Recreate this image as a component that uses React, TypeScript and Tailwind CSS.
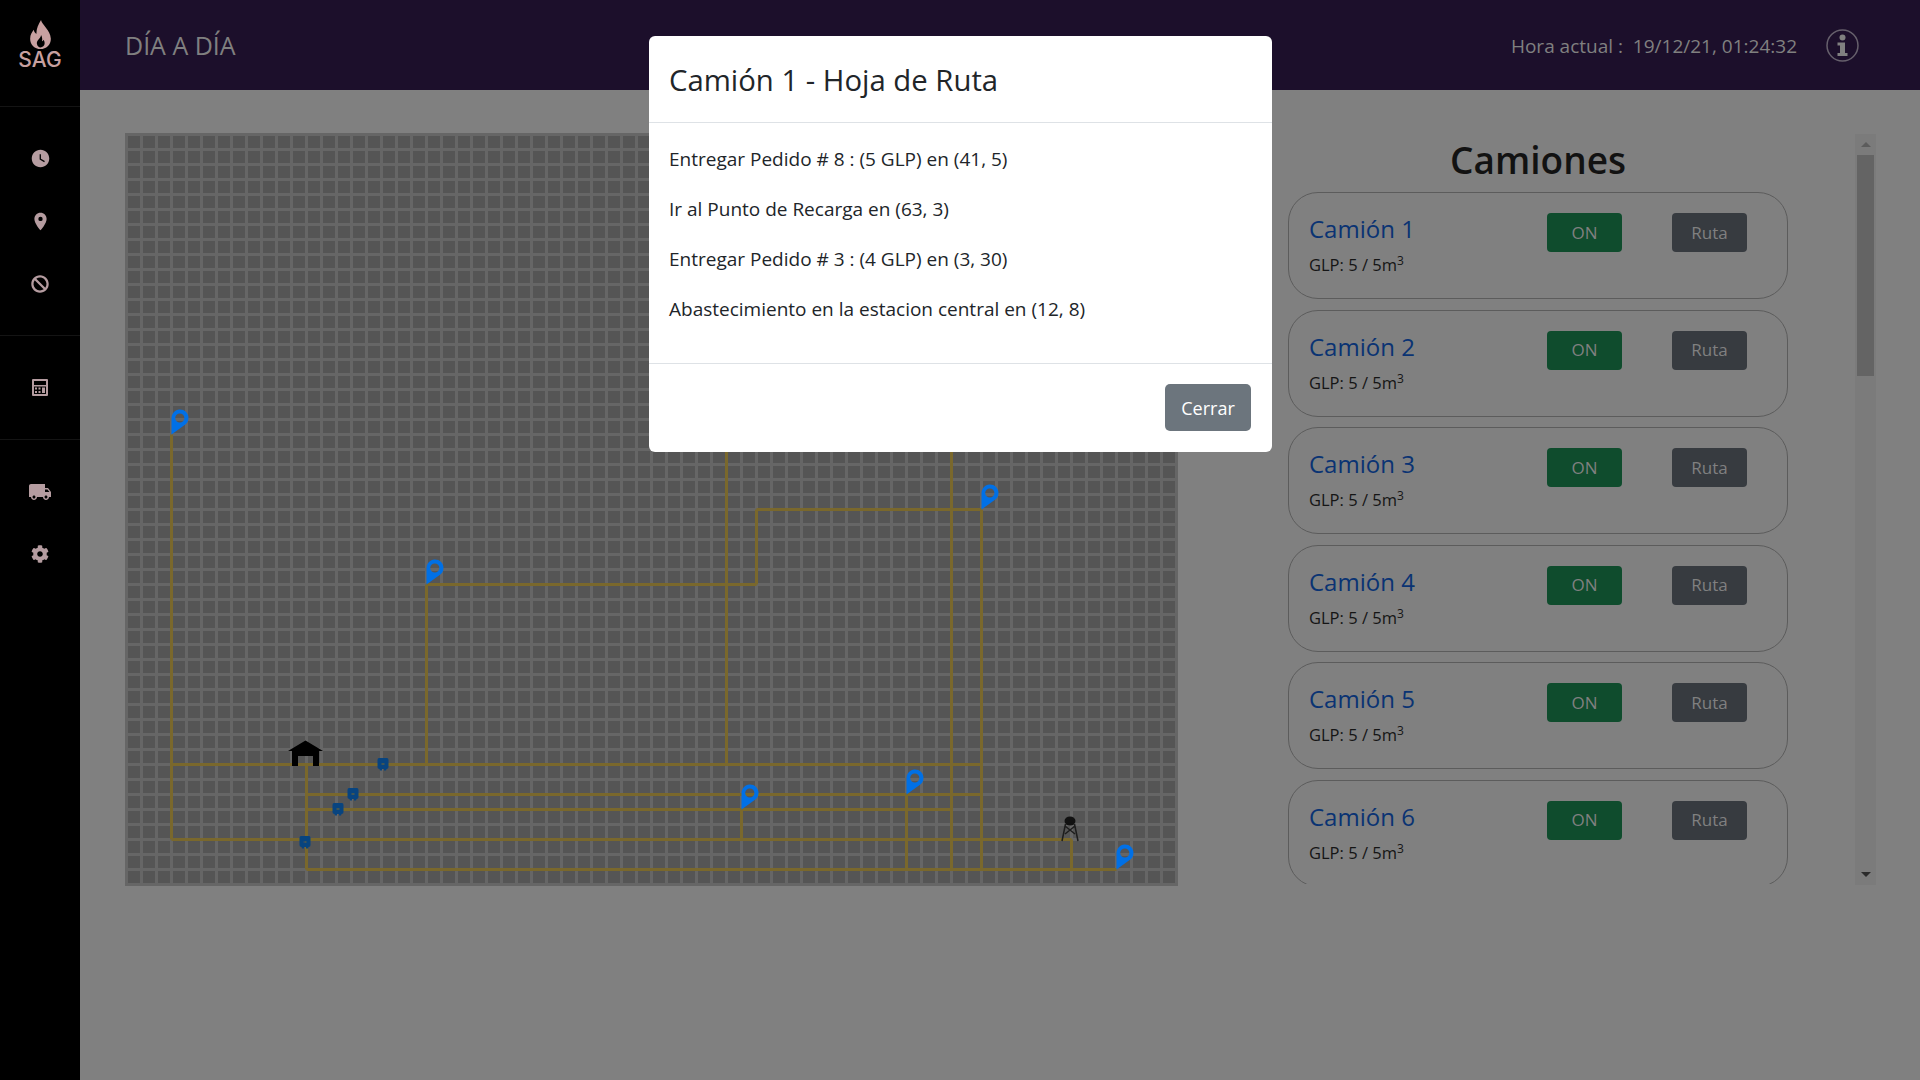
import { MdWatchLater, MdLocationOn, MdLocalShipping } from "react-icons/md";
import { FaBan, FaCog } from "react-icons/fa";

const px = (x: number) => 1.5 + 15 * x;
const py = (y: number) => 1.5 + 15 * (50 - y);

// route segments in map coordinates: [x1, y1, x2, y2]
const routes = [
  [3, 30, 3, 3],
  [3, 8, 57, 8],
  [3, 3, 63, 3],
  [12, 8, 12, 1],
  [12, 6, 57, 6],
  [12, 5, 55, 5],
  [12, 1, 66, 1],
  [20, 20, 20, 8],
  [20, 20, 42, 20],
  [42, 20, 42, 25],
  [42, 25, 57, 25],
  [57, 25, 57, 1],
  [40, 30, 40, 8],
  [55, 30, 55, 1],
  [41, 5, 41, 3],
  [52, 6, 52, 1],
  [63, 3, 63, 1],
];

const pins = [
  [3, 30],
  [20, 20],
  [57, 25],
  [41, 5],
  [52, 6],
  [66, 1],
];

const tanks = [
  [258, 631],
  [228, 661],
  [213, 676],
  [180, 709],
];

const camiones = [1, 2, 3, 4, 5, 6];

const rutaHoja = [
  "Entregar Pedido # 8 : (5 GLP) en (41, 5)",
  "Ir al Punto de Recarga en (63, 3)",
  "Entregar Pedido # 3 : (4 GLP) en (3, 30)",
  "Abastecimiento en la estacion central en (12, 8)",
];

const MapGrid = () => (
  <svg width="1053" height="753" viewBox="0 0 1053 753" className="block shrink-0">
    <defs>
      <pattern id="celda" x="3" y="3" width="15" height="15" patternUnits="userSpaceOnUse">
        <rect width="12" height="12" fill="#555555" />
      </pattern>
    </defs>
    <rect width="1053" height="753" fill="#666666" />
    <rect x="3" y="3" width="1050" height="750" fill="url(#celda)" />
    {routes.map(([x1, y1, x2, y2], i) => (
      <line key={i} x1={px(x1)} y1={py(y1)} x2={px(x2)} y2={py(y2)} stroke="#7a682c" strokeWidth="3" />
    ))}
    {/* almacen */}
    <path d="M180.5 607.5 L198 618 L194 618 L194 633 L188 633 L188 623 L173 623 L173 633 L167 633 L167 618 L163 618 Z" fill="#000" />
    {tanks.map(([x, y], i) => (
      <path
        key={i}
        transform={`translate(${x} ${y})`}
        d="M-4 -6 H4 Q5.5 -6 5.5 -4 V3 Q5.5 5 3.5 5 L3 6.5 H1 V5 H-1 V6.5 H-3 L-3.5 5 Q-5.5 5 -5.5 3 V-4 Q-5.5 -6 -4 -6 Z M-1.5 -0.5 V0.5 H1.5 V-0.5 Z"
        fill="#08447f"
        fillRule="evenodd"
      />
    ))}
    {/* planta de recarga */}
    <g transform="translate(945 690)" fill="none" stroke="#1d1d1d" strokeWidth="1.5">
      <ellipse cx="0" cy="-2" rx="5.5" ry="4.5" fill="#111" stroke="none" />
      <path d="M-4.5 1 L-8 18 M4.5 1 L8 18 M-5 3 L5 11 M5 3 L-5 11" />
    </g>
    {pins.map(([x, y], i) => (
      <path
        key={i}
        transform={`translate(${px(x)} ${py(y)})`}
        d="M0 0 V-16.3 A8.5 8.5 0 1 1 14.5 -10.5 Z M8.3 -16.5 m-4.6 0 a4.6 4.6 0 1 0 9.2 0 a4.6 4.6 0 1 0 -9.2 0 Z"
        fill="#0070e6"
        fillRule="evenodd"
      />
    ))}
  </svg>
);

const App = () => {
  return (
    <div className="relative flex h-[1080px] w-[1920px] overflow-hidden bg-[#808080] font-['Open_Sans',sans-serif]">
      <aside className="flex w-[80px] shrink-0 flex-col bg-black text-[#b59ca0]">
        <div className="flex h-[107px] flex-col items-center border-b border-[#141414] pt-[20px]">
          <svg width="21" height="29" viewBox="0 0 20 28">
            <path
              d="M10.5 0 C11.5 5 19.5 9.5 20 18 C20 24 15.5 28 10 28 C4.5 28 0 24 0 18 C0 14 2 11.5 3.5 9.5 C4 11.5 4.5 12.5 6 13.5 C6 8 8 4 10.5 0 Z M10.5 14.5 C10.5 18 6 19 6.5 23 C7 25.5 8.5 26.5 10 26.5 C12 26.5 14 25 14 22.5 C14 21 13.5 20 13 19 C12.5 20 12 20.5 11.5 20.5 C12 18.5 11.5 16 10.5 14.5 Z"
              fill="#c8a0a0"
              fillRule="evenodd"
            />
          </svg>
          <span className="mt-px text-[21px] leading-[20px] font-medium text-[#c8a0a0] font-['Inter',sans-serif]">SAG</span>
        </div>
        <div className="flex h-[229px] flex-col items-center gap-[41.5px] border-b border-[#141414] pt-[41px]">
          <MdWatchLater size={21} />
          <MdLocationOn size={21} />
          <FaBan size={18} className="mt-[2px]" />
        </div>
        <div className="flex h-[104px] items-center justify-center border-b border-[#141414]">
          <svg width="16" height="17" viewBox="0 0 16 17" fill="currentColor">
            <path
              d="M1 0 H15 Q16 0 16 1 V16 Q16 17 15 17 H1 Q0 17 0 16 V1 Q0 0 1 0 Z M2 2 V6 H14 V2 Z M2 7.5 V15 H14 V7.5 Z"
              fillRule="evenodd"
            />
            <rect x="3" y="8.5" width="2" height="2" />
            <rect x="6.5" y="8.5" width="2" height="2" />
            <rect x="3" y="12" width="2" height="2" />
            <rect x="6.5" y="12" width="2" height="2" />
            <rect x="10" y="8.5" width="3" height="5.5" />
          </svg>
        </div>
        <div className="flex flex-col items-center gap-[41px] pt-[40px]">
          <MdLocalShipping size={24} />
          <FaCog size={18} />
        </div>
      </aside>

      <div className="flex min-w-0 flex-1 flex-col">
        <header className="flex h-[90px] shrink-0 items-center justify-between bg-[#1c0f2b] pr-[61px] pl-[45px] text-[#808080]">
          <h1 className="pt-[2px] text-[25px]">DÍA A DÍA</h1>
          <div className="flex items-center gap-[29px]">
            <span className="pt-[2px] text-[19px]">Hora actual :&nbsp; 19/12/21, 01:24:32</span>
            <svg width="33" height="33" viewBox="0 0 33 33" fill="none">
              <circle cx="16.5" cy="16.5" r="15.5" stroke="#66606c" strokeWidth="1.5" />
              <circle cx="16.5" cy="8.5" r="3" fill="#808080" />
              <path d="M11.5 13.5 H19 V24 H21.5 V27 H11.5 V24 H14 V16.5 H11.5 Z" fill="#808080" />
            </svg>
          </div>
        </header>

        <main className="flex items-start pt-[43px] pl-[45px]">
          <MapGrid />
          <section className="ml-[110px] flex h-[751px] w-[588px] shrink-0 pt-px">
            <div className="flex min-w-0 flex-1 flex-col overflow-hidden">
              <h2 className="h-[58px] w-[500px] shrink-0 text-center text-[37px] leading-[52px] font-semibold text-[#121212]">Camiones</h2>
              {camiones.map((n) => (
                <div
                  key={n}
                  className="mb-[10.5px] flex h-[107px] w-[500px] shrink-0 justify-between rounded-[30px] border border-[#5c5c5c] pt-[20px] pr-[40px] pl-[20px]"
                >
                  <div>
                    <h3 className="text-[24px] leading-[32px] text-[#0a3373]">Camión {n}</h3>
                    <p className="mt-[8px] text-[16.5px] leading-[24px] text-[#151515]">
                      GLP: 5 / 5m<sup className="text-[12px]">3</sup>
                    </p>
                  </div>
                  <div className="flex h-[39px] gap-[50px]">
                    <button className="h-[39px] w-[75px] rounded-[4px] bg-[#0f4c2d] text-[17px] text-[#808080]">ON</button>
                    <button className="h-[39px] w-[75px] rounded-[4px] bg-[#373b40] text-[17px] text-[#808080]">Ruta</button>
                  </div>
                </div>
              ))}
            </div>
            <div className="flex h-[751px] w-[21px] shrink-0 flex-col items-center bg-[#7b7b7b]">
              <div className="flex h-[21px] shrink-0 items-center justify-center">
                <div className="h-0 w-0 border-x-[5px] border-b-[5px] border-x-transparent border-b-[#5c5c5c]" />
              </div>
              <div className="h-[221px] w-[17px] bg-[#646464]" />
              <div className="flex-1" />
              <div className="flex h-[21px] shrink-0 items-center justify-center">
                <div className="h-0 w-0 border-x-[5px] border-t-[5px] border-x-transparent border-t-[#2b2b2b]" />
              </div>
            </div>
          </section>
        </main>
      </div>

      {/* modal */}
      <div className="absolute top-[36px] left-[649px] flex h-[416px] w-[623px] flex-col rounded-[6px] bg-white text-[#212529]">
        <div className="flex h-[87px] shrink-0 items-center border-b border-[#dee2e6] px-[20px] pt-[3px]">
          <h2 className="text-[29.3px] font-medium">Camión 1 - Hoja de Ruta</h2>
        </div>
        <div className="flex h-[241px] shrink-0 flex-col gap-[20px] border-b border-[#dee2e6] px-[20px] pt-[21px]">
          {rutaHoja.map((r) => (
            <p key={r} className="text-[19px] leading-[30px]">{r}</p>
          ))}
        </div>
        <div className="flex flex-1 items-center justify-end pr-[21px] pb-[2px]">
          <button className="h-[47px] w-[86px] rounded-[5px] bg-[#6c757d] pt-[3px] text-[18px] text-white">Cerrar</button>
        </div>
      </div>
    </div>
  );
};

export default App;
